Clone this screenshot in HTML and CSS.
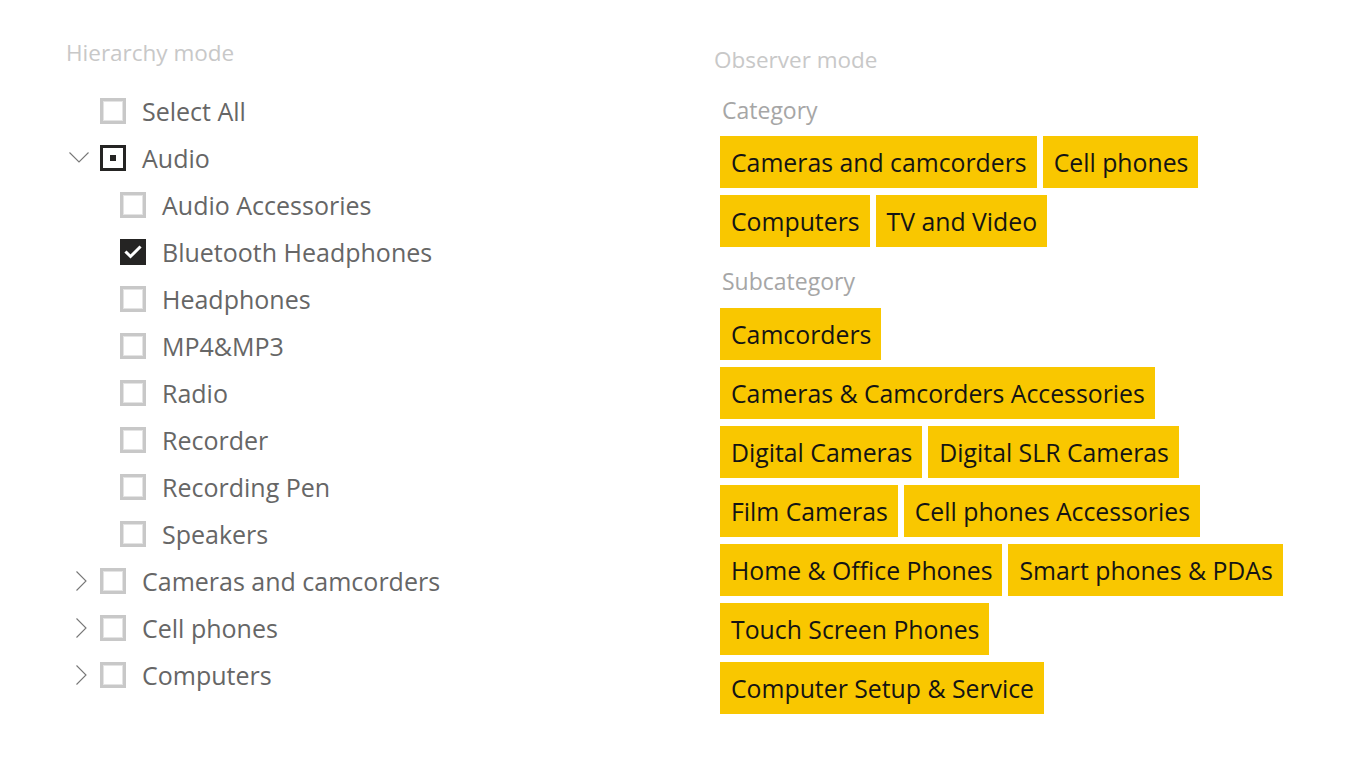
FILE: index.html
```html
<!DOCTYPE html>
<html lang="en">
<head>
<meta charset="utf-8">
<title>Slicer modes</title>
<link rel="stylesheet" href="styles.css">
</head>
<body>
<div class="page">
  <section class="hier">
    <h2 class="mode-title">Hierarchy mode</h2>
    <ul class="tree">
      <li class="row"><span class="chev"></span><span class="cb"></span><span class="lbl">Select All</span></li>
      <li class="row"><span class="chev"><svg viewBox="0 0 20 11" width="20" height="11"><path d="M0.5 0.5 L10 10 L19.5 0.5" fill="none" stroke="#777" stroke-width="1.1"/></svg></span><span class="cb partial"><span class="dot"></span></span><span class="lbl">Audio</span></li>
      <li class="row child"><span class="cb"></span><span class="lbl">Audio Accessories</span></li>
      <li class="row child"><span class="cb checked"><svg viewBox="0 0 26 26" width="26" height="26"><path d="M6.5 13.5 L10.5 17.5 L19.5 8.5" fill="none" stroke="#fff" stroke-width="3" stroke-linecap="square"/></svg></span><span class="lbl">Bluetooth Headphones</span></li>
      <li class="row child"><span class="cb"></span><span class="lbl">Headphones</span></li>
      <li class="row child"><span class="cb"></span><span class="lbl">MP4&amp;MP3</span></li>
      <li class="row child"><span class="cb"></span><span class="lbl">Radio</span></li>
      <li class="row child"><span class="cb"></span><span class="lbl">Recorder</span></li>
      <li class="row child"><span class="cb"></span><span class="lbl">Recording Pen</span></li>
      <li class="row child"><span class="cb"></span><span class="lbl">Speakers</span></li>
      <li class="row"><span class="chev right"><svg viewBox="0 0 11 20" width="11" height="20"><path d="M0.5 0.5 L10 10 L0.5 19.5" fill="none" stroke="#777" stroke-width="1.1"/></svg></span><span class="cb"></span><span class="lbl">Cameras and camcorders</span></li>
      <li class="row"><span class="chev right"><svg viewBox="0 0 11 20" width="11" height="20"><path d="M0.5 0.5 L10 10 L0.5 19.5" fill="none" stroke="#777" stroke-width="1.1"/></svg></span><span class="cb"></span><span class="lbl">Cell phones</span></li>
      <li class="row"><span class="chev right"><svg viewBox="0 0 11 20" width="11" height="20"><path d="M0.5 0.5 L10 10 L0.5 19.5" fill="none" stroke="#777" stroke-width="1.1"/></svg></span><span class="cb"></span><span class="lbl">Computers</span></li>
    </ul>
  </section>
  <section class="obs">
    <h2 class="mode-title">Observer mode</h2>
    <h3 class="group-title">Category</h3>
    <div class="chips">
      <div class="chip-row"><span class="chip">Cameras and camcorders</span><span class="chip">Cell phones</span></div>
      <div class="chip-row"><span class="chip">Computers</span><span class="chip">TV and Video</span></div>
    </div>
    <h3 class="group-title sub">Subcategory</h3>
    <div class="chips">
      <div class="chip-row"><span class="chip">Camcorders</span></div>
      <div class="chip-row"><span class="chip">Cameras &amp; Camcorders Accessories</span></div>
      <div class="chip-row"><span class="chip">Digital Cameras</span><span class="chip">Digital SLR Cameras</span></div>
      <div class="chip-row"><span class="chip">Film Cameras</span><span class="chip">Cell phones Accessories</span></div>
      <div class="chip-row"><span class="chip">Home &amp; Office Phones</span><span class="chip">Smart phones &amp; PDAs</span></div>
      <div class="chip-row"><span class="chip">Touch Screen Phones</span></div>
      <div class="chip-row"><span class="chip">Computer Setup &amp; Service</span></div>
    </div>
  </section>
</div>
</body>
</html>
```
FILE: styles.css
```css
* { box-sizing: border-box; }
html, body { margin: 0; padding: 0; background: #fff; }
body {
  font-family: "Open Sans", "Noto Sans", sans-serif;
  width: 1366px;
  height: 768px;
  overflow: hidden;
}
.page {
  display: flex;
}
.hier {
  width: 714px;
  padding-left: 66px;
  padding-top: 39px;
}
.mode-title {
  margin: 0;
  font-weight: 400;
  font-size: 22.5px;
  line-height: 28px;
  color: #c8c8c8;
  white-space: nowrap;
}
.tree {
  list-style: none;
  margin: 20px 0 0 0;
  padding: 0;
}
.row {
  display: flex;
  align-items: center;
  height: 47px;
}
.chev {
  width: 34px;
  height: 47px;
  display: flex;
  align-items: center;
  padding-left: 3px;
}
.chev.right { padding-left: 10px; }
.chev svg { display: block; }
.row.child { padding-left: 54px; }
.cb {
  width: 26px;
  height: 26px;
  border: 3px solid #c8c8c8;
  box-shadow: inset 0 0 0 1px #e4e4e4;
  background: #fff;
  flex: none;
  display: flex;
  align-items: center;
  justify-content: center;
}
.cb.partial { border-color: #252423; box-shadow: none; }
.cb .dot { width: 6px; height: 6px; background: #252423; }
.cb.checked { background: #252423; border-color: #252423; box-shadow: none; }
.cb.checked svg { display: block; margin: -3px; }
.lbl {
  margin-left: 16px;
  font-size: 25px;
  line-height: 34px;
  color: #666666;
  white-space: nowrap;
}
.obs {
  padding-top: 46px;
}
.group-title {
  margin: 0;
  padding-left: 8px;
  font-weight: 400;
  font-size: 23px;
  line-height: 28px;
  color: #a6a6a6;
}
.obs .mode-title + .group-title { margin-top: 22px; }
.group-title.sub { margin-top: 20px; }
.chips {
  display: flex;
  flex-direction: column;
  gap: 7px;
  padding-left: 6px;
  margin-top: 12px;
}
.group-title.sub + .chips { margin-top: 13px; }
.chip-row {
  display: flex;
  gap: 6px;
}
.chip {
  background: #f9c700;
  color: #141414;
  height: 52px;
  line-height: 52px;
  padding: 0 10px 0 11px;
  font-size: 24.8px;
  white-space: nowrap;
}
```
